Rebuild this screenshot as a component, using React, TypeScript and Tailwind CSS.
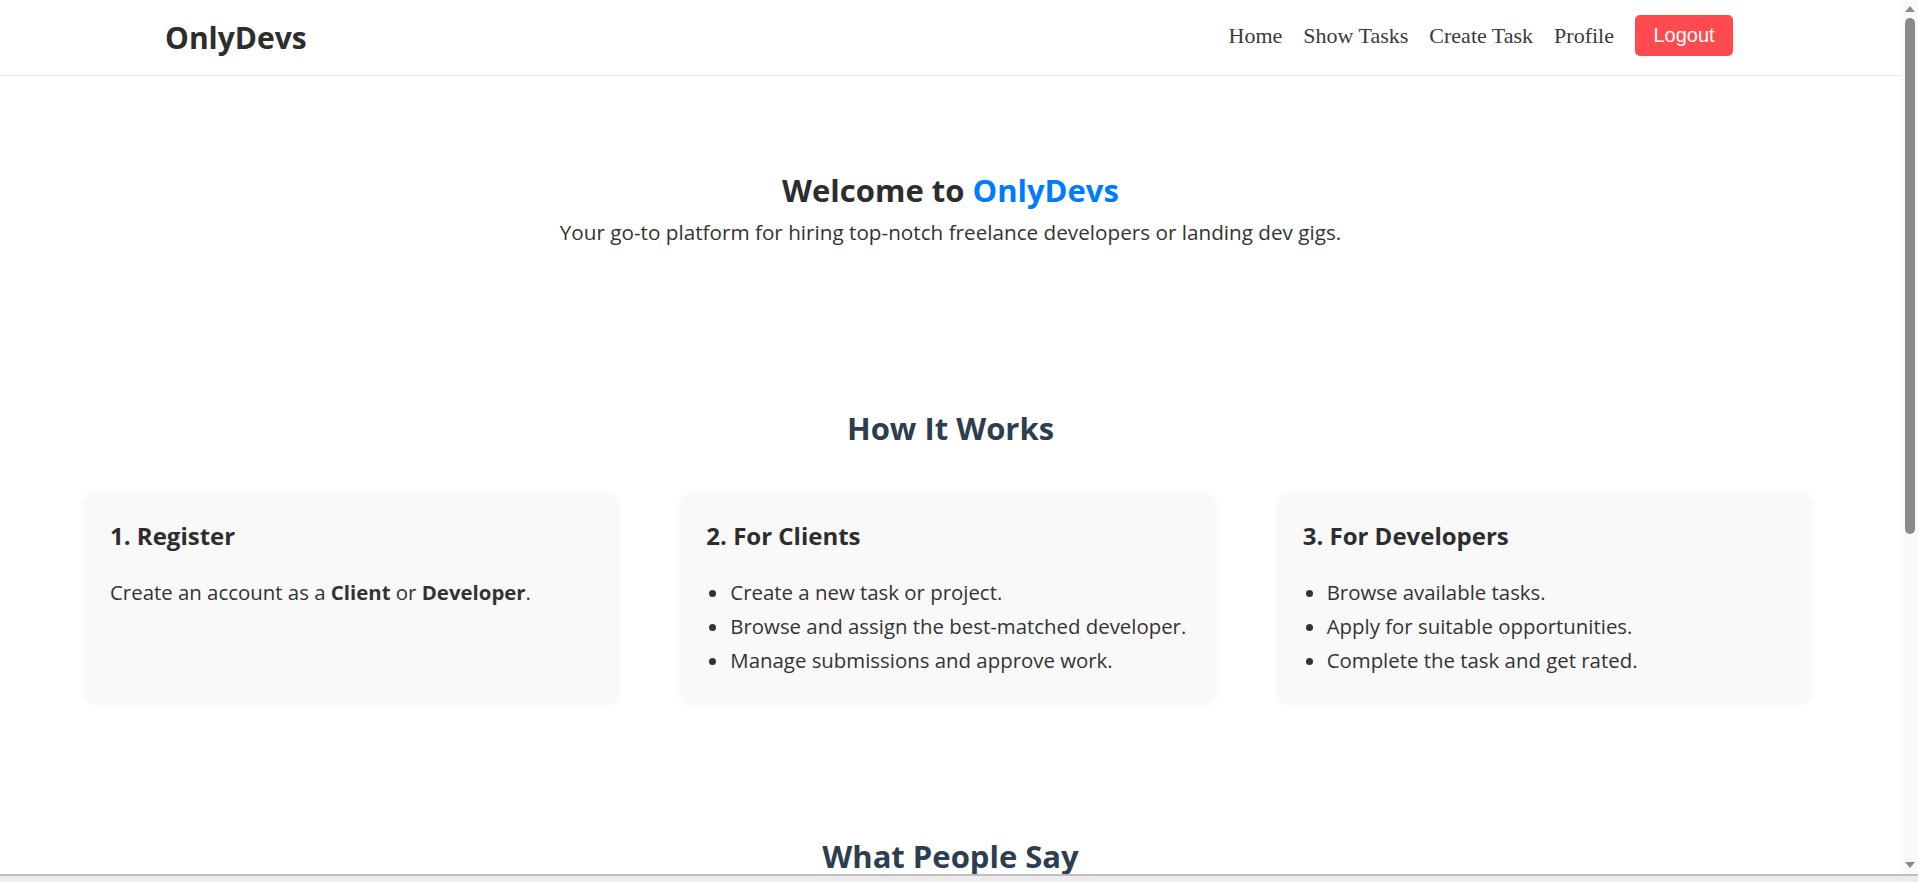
const sans = "font-['Open_Sans',sans-serif]";

function Header() {
  return (
    <header className="h-[76px] border-b border-[#e8e8e8] flex items-center justify-between pl-[165px] pr-[168px] bg-white">
      <div className={`${sans} text-[30px] font-bold text-[#2d2d2d]`}>OnlyDevs</div>
      <nav className="flex items-center gap-[21px] mb-[5px]">
        {["Home", "Show Tasks", "Create Task", "Profile"].map((l) => (
          <a key={l} href="#" className="font-['Liberation_Serif',serif] text-[22px] text-[#3a3a3a]">
            {l}
          </a>
        ))}
        <button className="font-['Liberation_Sans',sans-serif] text-[20px] text-white bg-[#ff4b4f] rounded-[5px] w-[98px] h-[41px] leading-none">
          Logout
        </button>
      </nav>
    </header>
  );
}

function Card({ title, children }: { title: string; children: React.ReactNode }) {
  return (
    <div className="flex-1 bg-[#f9f9f9] rounded-[10px] shadow-[0_2px_8px_rgba(0,0,0,0.06)] p-6">
      <h3 className="text-[24px] font-bold leading-[38px] text-[#2d2d2d] mb-[20px]">{title}</h3>
      {children}
    </div>
  );
}

function Bullets({ items }: { items: string[] }) {
  return (
    <ul className="list-disc pl-6 text-[20.4px] leading-[34px] text-[#333]">
      {items.map((i) => (
        <li key={i}>{i}</li>
      ))}
    </ul>
  );
}

export default function App() {
  return (
    <div className={`${sans} w-full h-[882px] flex flex-col overflow-hidden bg-white`}>
      <div className="flex flex-1 min-h-0">
        <main className="flex-1 min-w-0 overflow-hidden">
          <Header />

          {/* hero */}
          <section className="flex flex-col items-center pt-[95px]">
            <h1 className="text-[31px] font-bold leading-[38px] text-[#2d2d2d]">
              Welcome to <span className="text-[#007bff]">OnlyDevs</span>
            </h1>
            <p className="mt-[7px] text-[20.7px] leading-[32px] text-[#333]">
              Your go-to platform for hiring top-notch freelance developers or landing dev gigs.
            </p>
          </section>

          {/* how it works */}
          <section className="flex flex-col items-center mt-[161px]">
            <h2 className="text-[31px] font-bold leading-[38px] text-[#2c3e50]">How It Works</h2>
            <div className="flex gap-[65px] w-[1724px] mt-[46px] ml-[86px] self-start">
              <Card title="1. Register">
                <p className="text-[20.4px] leading-[34px] text-[#333]">
                  Create an account as a <b>Client</b> or <b>Developer</b>.
                </p>
              </Card>
              <Card title="2. For Clients">
                <Bullets
                  items={[
                    "Create a new task or project.",
                    "Browse and assign the best-matched developer.",
                    "Manage submissions and approve work.",
                  ]}
                />
              </Card>
              <Card title="3. For Developers">
                <Bullets
                  items={[
                    "Browse available tasks.",
                    "Apply for suitable opportunities.",
                    "Complete the task and get rated.",
                  ]}
                />
              </Card>
            </div>
          </section>

          <section className="flex flex-col items-center mt-[136px]">
            <h2 className="text-[31px] font-bold leading-[38px] text-[#2c3e50]">What People Say</h2>
          </section>
        </main>

        {/* vertical scrollbar */}
        <div className="w-[17px] bg-[#f9f9f9] flex flex-col items-center">
          <div className="mt-[6px] w-0 h-0 border-l-[5px] border-r-[5px] border-b-[6px] border-l-transparent border-r-transparent border-b-[#8a8a8a]" />
          <div className="mt-[6px] w-[10px] h-[516px] rounded-full bg-[#8a8a8a]" />
          <div className="flex-1" />
          <div className="mb-[6px] w-0 h-0 border-l-[5px] border-r-[5px] border-t-[6px] border-l-transparent border-r-transparent border-t-[#8a8a8a]" />
        </div>
      </div>
      {/* horizontal scrollbar */}
      <div className="h-[8px] border-t-2 border-[#bfbfbf] bg-[#ececec]" />
    </div>
  );
}
